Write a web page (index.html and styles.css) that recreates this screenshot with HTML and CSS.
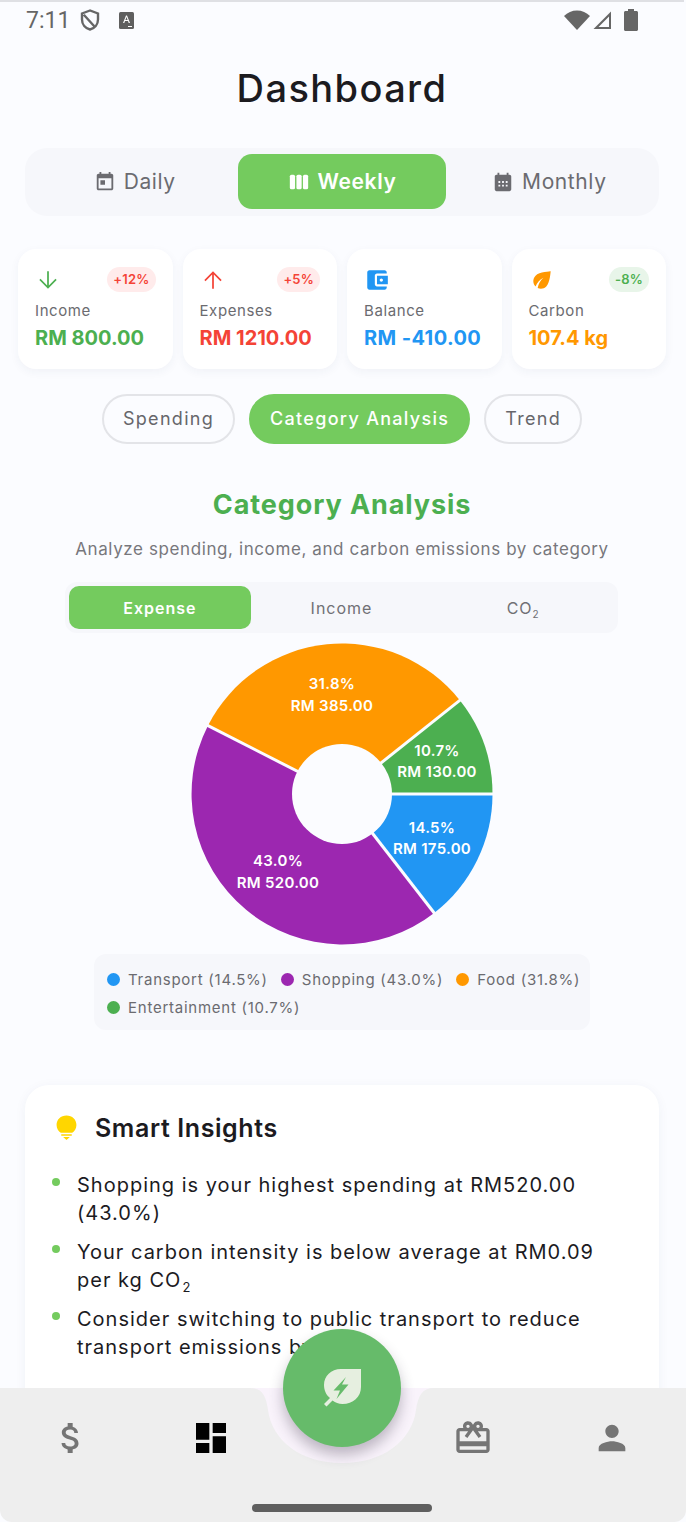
FILE: index.html
```html
<!DOCTYPE html>
<html>
<head>
  <title>Dashboard</title>
  <link rel="stylesheet" href="styles.css">
</head>
<body>
  <main class="content">
    <div class="status-bar">
      <span class="time">7:11</span>
      <svg class="st-shield" viewBox="0 0 20 22"><path d="M10 1.500 2 4.500v6c0 5 3.400 8.800 8 10 4.600-1.200 8-5 8-10v-6zM3.800 5.800 14.500 17.500" fill="none" stroke="#666" stroke-width="2.400"/></svg>
      <svg class="st-a" viewBox="0 0 15 17"><rect width="15" height="17" rx="1.500" fill="#5f5f5f"/><path d="M4 11 7 3.500h1L11 11H9.700L9 9H6l-.7 2zM6.400 8h2.200L7.500 5z" fill="#fff"/><rect x="9" y="14" width="4" height="1" fill="#fff"/></svg>
      <span class="st-spacer"></span>
      <svg class="st-wifi" viewBox="0 0 26 20"><path d="M13 20 0 6C3.500 2.500 8 .5 13 .5S22.500 2.500 26 6z" fill="#666"/></svg>
      <svg class="st-signal" viewBox="0 0 20 20"><path d="M19 1.500V19H1.500zM17 6.500 6.500 17H17z" fill="#666" fill-rule="evenodd"/></svg>
      <svg class="st-battery" viewBox="0 0 14 22"><path d="M4 0h6v2h2.500c.8 0 1.500.7 1.500 1.500v17c0 .8-.7 1.500-1.500 1.500h-11C.7 22 0 21.300 0 20.500v-17C0 2.700.7 2 1.500 2H4z" fill="#666"/></svg>
    </div>

    <h1 class="title">Dashboard</h1>

    <div class="period-tabs">
      <div class="period-tab">
        <svg class="tab-icon" viewBox="0 0 24 24"><path d="M19 3h-1V1h-2v2H8V1H6v2H5c-1.110 0-2 .9-2 2v14c0 1.100.89 2 2 2h14c1.100 0 2-.9 2-2V5c0-1.100-.9-2-2-2zm0 16H5V8h14v11zM7 10h5v5H7z"/></svg>
        Daily
      </div>
      <div class="period-tab active">
        <svg class="tab-icon" viewBox="0 0 24 24"><rect x="2" y="4" width="5.700" height="16" rx="1.800"/><rect x="9.200" y="4" width="5.700" height="16" rx="1.800"/><rect x="16.300" y="4" width="5.700" height="16" rx="1.800"/></svg>
        Weekly
      </div>
      <div class="period-tab">
        <svg class="tab-icon" viewBox="0 0 24 24"><path d="M19 4h-1V2h-2v2H8V2H6v2H5c-1.100 0-2 .9-2 2v14c0 1.100.9 2 2 2h14c1.100 0 2-.9 2-2V6c0-1.100-.9-2-2-2zM7 11h2v2H7zm4 0h2v2h-2zm4 0h2v2h-2zm-8 4h2v2H7zm4 0h2v2h-2zm4 0h2v2h-2z" fill-rule="evenodd"/></svg>
        Monthly
      </div>
    </div>

    <div class="stats">
      <div class="stat">
        <div class="stat-top">
          <svg class="stat-icon green" viewBox="0 0 24 24"><path d="M20 12l-1.100-1.100L12.800 17V4h-1.600v13L5.100 10.900 4 12l8 8z"/></svg>
          <span class="badge bad">+12%</span>
        </div>
        <div class="stat-label">Income</div>
        <div class="stat-value green">RM 800.00</div>
      </div>
      <div class="stat">
        <div class="stat-top">
          <svg class="stat-icon red" viewBox="0 0 24 24"><path d="M4 12l1.100 1.100L11.200 7v13h1.600V7l6.100 6.100L20 12l-8-8z"/></svg>
          <span class="badge bad">+5%</span>
        </div>
        <div class="stat-label">Expenses</div>
        <div class="stat-value red">RM 1210.00</div>
      </div>
      <div class="stat">
        <div class="stat-top">
          <svg class="stat-icon blue" viewBox="0 0 24 24"><path d="M21 18v1c0 1.100-.9 2-2 2H5c-1.110 0-2-.9-2-2V5c0-1.100.89-2 2-2h14c1.100 0 2 .9 2 2v1h-9c-1.110 0-2 .9-2 2v8c0 1.100.89 2 2 2h9zm-9-2h10V8H12v8zm4-2.500c-.83 0-1.500-.67-1.500-1.500s.67-1.500 1.500-1.500 1.500.67 1.500 1.500-.67 1.500-1.500 1.500z"/></svg>
        </div>
        <div class="stat-label">Balance</div>
        <div class="stat-value blue wide">RM -410.00</div>
      </div>
      <div class="stat">
        <div class="stat-top">
          <svg class="stat-icon orange" viewBox="0 0 24 24"><path d="M6.050 8.050c-2.730 2.730-2.730 7.150-.02 9.880 1.470-3.400 4.090-6.240 7.360-7.930-2.770 2.340-4.710 5.610-5.390 9.320 2.600 1.230 5.800.78 7.950-1.370C19.430 14.470 20 4 20 4S9.530 4.570 6.050 8.050z"/></svg>
          <span class="badge good">-8%</span>
        </div>
        <div class="stat-label">Carbon</div>
        <div class="stat-value orange">107.4 kg</div>
      </div>
    </div>

    <div class="chips">
      <div class="chip">Spending</div>
      <div class="chip active">Category Analysis</div>
      <div class="chip">Trend</div>
    </div>

    <h2 class="section-title">Category Analysis</h2>
    <p class="section-sub">Analyze spending, income, and carbon emissions by category</p>

    <div class="type-toggle">
      <div class="type-opt active">Expense</div>
      <div class="type-opt">Income</div>
      <div class="type-opt"><span>CO<sub>2</sub></span></div>
    </div>

    <svg class="pie" viewBox="0 0 302 302">
      <path d="M151 151 301.500 151A150.500 150.500 0 0 1 243.200 269.900Z" fill="#2196f3"/>
      <path d="M151 151 243.200 269.900A150.500 150.500 0 0 1 16.900 82.700Z" fill="#9c27b0"/>
      <path d="M151 151 16.900 82.700A150.500 150.500 0 0 1 268.800 57.300Z" fill="#ff9800"/>
      <path d="M151 151 268.800 57.300A150.500 150.500 0 0 1 301.500 151Z" fill="#4caf50"/>
      <g class="pie-gaps">
        <line x1="151" y1="151" x2="302" y2="151"/>
        <line x1="151" y1="151" x2="244" y2="271"/>
        <line x1="151" y1="151" x2="16" y2="82.200"/>
        <line x1="151" y1="151" x2="270" y2="56.400"/>
      </g>
      <circle cx="151" cy="151" r="50" fill="#fbfcff"/>
      <text class="pie-label" x="141" y="46">31.8%</text>
      <text class="pie-label" x="141" y="68">RM 385.00</text>
      <text class="pie-label" x="246" y="113">10.7%</text>
      <text class="pie-label" x="246" y="134">RM 130.00</text>
      <text class="pie-label" x="241" y="190">14.5%</text>
      <text class="pie-label" x="241" y="211">RM 175.00</text>
      <text class="pie-label" x="87" y="223">43.0%</text>
      <text class="pie-label" x="87" y="245">RM 520.00</text>
    </svg>

    <div class="legend">
      <div class="legend-item"><span class="dot dot-blue"></span>Transport (14.5%)</div>
      <div class="legend-item"><span class="dot dot-purple"></span>Shopping (43.0%)</div>
      <div class="legend-item"><span class="dot dot-orange"></span>Food (31.8%)</div>
      <div class="legend-item"><span class="dot dot-green"></span>Entertainment (10.7%)</div>
    </div>

    <section class="insights">
      <div class="insights-head">
        <svg class="bulb" viewBox="0 0 22 26"><path d="M11 0C5 0 .6 4.300.6 9.800c0 3.800 2 6.400 4.400 8.200h12c2.400-1.800 4.400-4.400 4.400-8.200C21.400 4.300 17 0 11 0zM5.500 19.500h11V21h-11zM7.500 22.500h7L11 25.500z" fill="#ffd600"/></svg>
        <h3>Smart Insights</h3>
      </div>
      <ul class="insight-list">
        <li>Shopping is your highest spending at RM520.00 (43.0%)</li>
        <li>Your carbon intensity is below average at RM0.09 per kg CO<sub>2</sub></li>
        <li>Consider switching to public transport to reduce transport emissions by 15%</li>
      </ul>
    </section>
  </main>

  <nav class="bottom-nav">
    <svg class="nav-notch" viewBox="0 0 184 76"><path d="M0 0C12 0 16 8 18 22 22 52 50 75 92 75 134 75 162 52 166 22 168 8 172 0 184 0Z" fill="#f9f3fb"/></svg>
    <button class="fab">
      <svg class="fab-icon" viewBox="0 0 40 38"><path d="M39 0H19C9 0 2 7 2 16c0 5 2 10 6 13l-6 6 2.500 2.500 6-6c3 2 6 3.500 10 3.500 10.500 0 18.500-7 18.500-17z" fill="#e6efe0"/><path d="M24 8 11.500 21.500H18L14.500 30 26.500 15.500H20z" fill="#66bb6a"/></svg>
    </button>
    <div class="nav-row">
      <svg class="nav-icon" viewBox="0 0 24 24"><path d="M11.800 10.900c-2.270-.59-3-1.200-3-2.150 0-1.090 1.010-1.850 2.700-1.850 1.780 0 2.440.85 2.500 2.100h2.210c-.07-1.720-1.120-3.300-3.210-3.810V3h-3v2.160c-1.940.42-3.500 1.680-3.500 3.610 0 2.310 1.910 3.460 4.700 4.130 2.500.6 3 1.480 3 2.410 0 .69-.49 1.790-2.700 1.790-2.060 0-2.870-.92-2.980-2.100h-2.200c.12 2.190 1.760 3.420 3.680 3.830V21h3v-2.150c1.950-.37 3.500-1.500 3.500-3.550 0-2.840-2.430-3.810-4.700-4.400z"/></svg>
      <svg class="nav-icon current" viewBox="0 0 24 24"><path d="M3 13h8V3H3v10zm0 8h8v-6H3v6zm10 0h8V11h-8v10zm0-18v6h8V3h-8z"/></svg>
      <span class="nav-gap"></span>
      <svg class="nav-icon" viewBox="0 0 24 24"><path d="M20 6h-2.180c.11-.31.18-.65.18-1 0-1.660-1.340-3-3-3-1.050 0-1.960.54-2.500 1.350l-.5.67-.5-.68C10.960 2.540 10.050 2 9 2 7.340 2 6 3.340 6 5c0 .35.07.69.18 1H4c-1.110 0-1.990.89-1.990 2L2 19c0 1.110.89 2 2 2h16c1.110 0 2-.89 2-2V8c0-1.110-.89-2-2-2zm-5-2c.55 0 1 .45 1 1s-.45 1-1 1-1-.45-1-1 .45-1 1-1zM9 4c.55 0 1 .45 1 1s-.45 1-1 1-1-.45-1-1 .45-1 1-1zm11 15H4v-2h16v2zm0-5H4V8h5.080L7 10.830 8.620 12 11 8.760l1-1.360 1 1.360L15.380 12 17 10.830 14.920 8H20v6z"/></svg>
      <svg class="nav-icon" viewBox="0 0 24 24"><path d="M12 12c2.210 0 4-1.790 4-4s-1.790-4-4-4-4 1.790-4 4 1.790 4 4 4zm0 2c-2.670 0-8 1.340-8 4v2h16v-2c0-2.660-5.330-4-8-4z"/></svg>
    </div>
    <div class="home-bar"></div>
  </nav>
</body>
</html>
```

FILE: styles.css
```css
* {
  box-sizing: border-box;
}

html, body {
  margin: 0;
  height: 1522px;
  overflow: hidden;
}

body {
  display: flex;
  flex-direction: column;
  font-family: Inter, "Noto Sans", sans-serif;
  background-color: #fbfcff;
  color: #1c1b1f;
}

.content {
  height: 1388px;
  overflow: hidden;
  padding-right: 2px;
}

/* status bar */
.status-bar {
  display: flex;
  align-items: center;
  height: 40px;
  border-top: 2px solid #dfe0e4;
  padding: 0 46px 2px 26px;
}

.time {
  font-family: Roboto, sans-serif;
  font-size: 23px;
  color: #666;
  width: 54px;
}

.st-shield {
  width: 20px;
  height: 22px;
}

.st-a {
  width: 15px;
  height: 17px;
  margin-left: 19px;
}

.st-spacer {
  flex: 1;
}

.st-wifi {
  width: 26px;
  height: 20px;
}

.st-signal {
  width: 20px;
  height: 20px;
  margin-left: 2px;
}

.st-battery {
  width: 14px;
  height: 22px;
  margin-left: 12px;
}

/* header */
.title {
  margin: 24px 0 0;
  text-align: center;
  font-size: 38px;
  line-height: 48px;
  font-weight: 500;
  letter-spacing: 1.4px;
}

.period-tabs {
  display: grid;
  grid-template-columns: repeat(3, 1fr);
  height: 68px;
  margin: 36px 25px 0;
  padding: 6px 6px 7px;
  background-color: #f6f7fb;
  border-radius: 22px;
}

.period-tab {
  display: flex;
  align-items: center;
  justify-content: center;
  gap: 8px;
  font-size: 21px;
  letter-spacing: 0.6px;
  color: #6b6b70;
  border-radius: 14px;
}

.period-tab.active {
  background-color: #74cb5e;
  color: #fff;
  font-weight: 600;
}

.tab-icon {
  width: 22px;
  height: 22px;
  fill: currentColor;
}

/* stat cards */
.stats {
  display: grid;
  grid-template-columns: repeat(4, 1fr);
  gap: 10px;
  margin: 33px 18px 0;
}

.stat {
  height: 120px;
  padding: 18px 17px;
  background-color: #fff;
  border-radius: 18px;
  box-shadow: 0 3px 10px rgba(40, 50, 90, 0.05);
}

.stat-top {
  display: flex;
  justify-content: space-between;
  align-items: center;
  height: 25px;
}

.stat-icon {
  width: 26px;
  height: 26px;
  fill: currentColor;
}

.green { color: #4caf50; }
.red { color: #f44336; }
.blue { color: #2196f3; }
.orange { color: #ff9800; }

.badge {
  font-size: 13px;
  font-weight: 600;
  line-height: 25px;
  padding: 0 6px;
  border-radius: 13px;
  letter-spacing: 0.2px;
}

.badge.bad {
  background-color: #ffebeb;
  color: #f44336;
}

.badge.good {
  background-color: #e8f5e9;
  color: #4caf50;
}

.stat-label {
  margin-top: 8px;
  font-size: 15px;
  line-height: 22px;
  letter-spacing: 0.6px;
  color: #6b6b70;
}

.stat-value {
  margin-top: 3px;
  font-size: 20px;
  line-height: 26px;
  font-weight: 700;
  white-space: nowrap;
}

.stat-value.wide {
  letter-spacing: 0.4px;
}

/* chips */
.chips {
  display: flex;
  justify-content: center;
  gap: 14px;
  margin-top: 25px;
}

.chip {
  height: 50px;
  padding: 0 19px;
  font-size: 18px;
  line-height: 46px;
  letter-spacing: 1.3px;
  color: #66666b;
  background-color: #fbfcff;
  border: 2px solid #e3e4e8;
  border-radius: 25px;
}

.chip.active {
  background-color: #74cb5e;
  border-color: #74cb5e;
  color: #fff;
  font-weight: 500;
}

/* category section */
.section-title {
  margin: 41px 0 0;
  text-align: center;
  font-size: 27px;
  line-height: 40px;
  font-weight: 700;
  letter-spacing: 0.9px;
  color: #4caf50;
}

.section-sub {
  margin: 12px 0 0;
  text-align: center;
  font-size: 17px;
  line-height: 24px;
  letter-spacing: 0.6px;
  color: #77777c;
}

.type-toggle {
  display: grid;
  grid-template-columns: repeat(3, 1fr);
  height: 51px;
  margin: 21px 66px 0 65px;
  padding: 4px;
  background-color: #f6f7fb;
  border-radius: 12px;
}

.type-opt {
  display: flex;
  align-items: center;
  justify-content: center;
  font-size: 16px;
  letter-spacing: 1px;
  color: #707075;
  border-radius: 10px;
}

.type-opt.active {
  background-color: #74cb5e;
  color: #fff;
  font-weight: 600;
}

.type-opt sub {
  font-size: 10px;
  line-height: 0;
}

.pie {
  display: block;
  width: 302px;
  height: 302px;
  margin: 9.5px 0 0 191px;
}

.pie-gaps line {
  stroke: #fbfcff;
  stroke-width: 3;
}

.pie-label {
  font-size: 15px;
  font-weight: 600;
  letter-spacing: 0.3px;
  fill: #fff;
  text-anchor: middle;
}

.legend {
  display: flex;
  flex-wrap: wrap;
  gap: 7px 13px;
  align-content: center;
  width: 496px;
  height: 76px;
  margin: 9px auto 0;
  padding: 4px 2px 0 13px;
  background-color: #f6f7fb;
  border-radius: 12px;
}

.legend-item {
  display: flex;
  align-items: center;
  font-size: 15px;
  line-height: 21px;
  letter-spacing: 0.75px;
  color: #6b6b70;
}

.dot {
  width: 13px;
  height: 13px;
  margin-right: 8px;
  border-radius: 50%;
}

.dot-blue { background-color: #2196f3; }
.dot-purple { background-color: #9c27b0; }
.dot-orange { background-color: #ff9800; }
.dot-green { background-color: #4caf50; }

/* insights */
.insights {
  margin: 55px 25px 0;
  padding: 26px 26px 40px;
  height: 330px;
  background-color: #fff;
  border-radius: 24px;
  box-shadow: 0 2px 12px rgba(40, 50, 90, 0.05);
}

.insights-head {
  display: flex;
  align-items: center;
  gap: 18px;
  padding-left: 5px;
}

.bulb {
  width: 21px;
  height: 26px;
}

.insights-head h3 {
  margin: 0;
  font-size: 25px;
  line-height: 34px;
  font-weight: 600;
  letter-spacing: 0.6px;
  color: #1c1b1f;
}

.insight-list {
  list-style: none;
  margin: 26px 0 0;
  padding: 0 12px 0 26px;
}

.insight-list li {
  position: relative;
  margin-bottom: 11px;
  font-size: 20px;
  line-height: 28px;
  letter-spacing: 1px;
}

.insight-list li::before {
  content: "";
  position: absolute;
  left: -25px;
  top: 7px;
  width: 8px;
  height: 8px;
  border-radius: 50%;
  background-color: #74cb5e;
}

.insight-list sub {
  margin-left: 1px;
  font-size: 13px;
  line-height: 0;
}

/* bottom nav */
.bottom-nav {
  position: relative;
  flex: 1;
  background-color: #eeeeee;
  border-radius: 0 0 12px 12px;
}

.nav-notch {
  position: absolute;
  left: 250px;
  top: 0;
  width: 184px;
  height: 76px;
}

.fab {
  position: absolute;
  left: 283px;
  top: -59px;
  width: 118px;
  height: 118px;
  display: flex;
  align-items: center;
  justify-content: center;
  padding: 0;
  border: none;
  border-radius: 50%;
  background-color: #66bb6a;
  box-shadow: 0 8px 14px rgba(60, 50, 70, 0.32);
}

.fab-icon {
  width: 40px;
  height: 38px;
}

.nav-row {
  display: flex;
  justify-content: space-between;
  align-items: center;
  padding: 30px 54px 0 51px;
}

.nav-gap {
  width: 23px;
}

.nav-icon {
  width: 40px;
  height: 40px;
  fill: #757575;
}

.nav-icon.current {
  fill: #000;
}

.home-bar {
  width: 180px;
  height: 8px;
  margin: 46px auto 0;
  transform: translateX(-1px);
  border-radius: 4px;
  background-color: #5f5f5f;
}
```
